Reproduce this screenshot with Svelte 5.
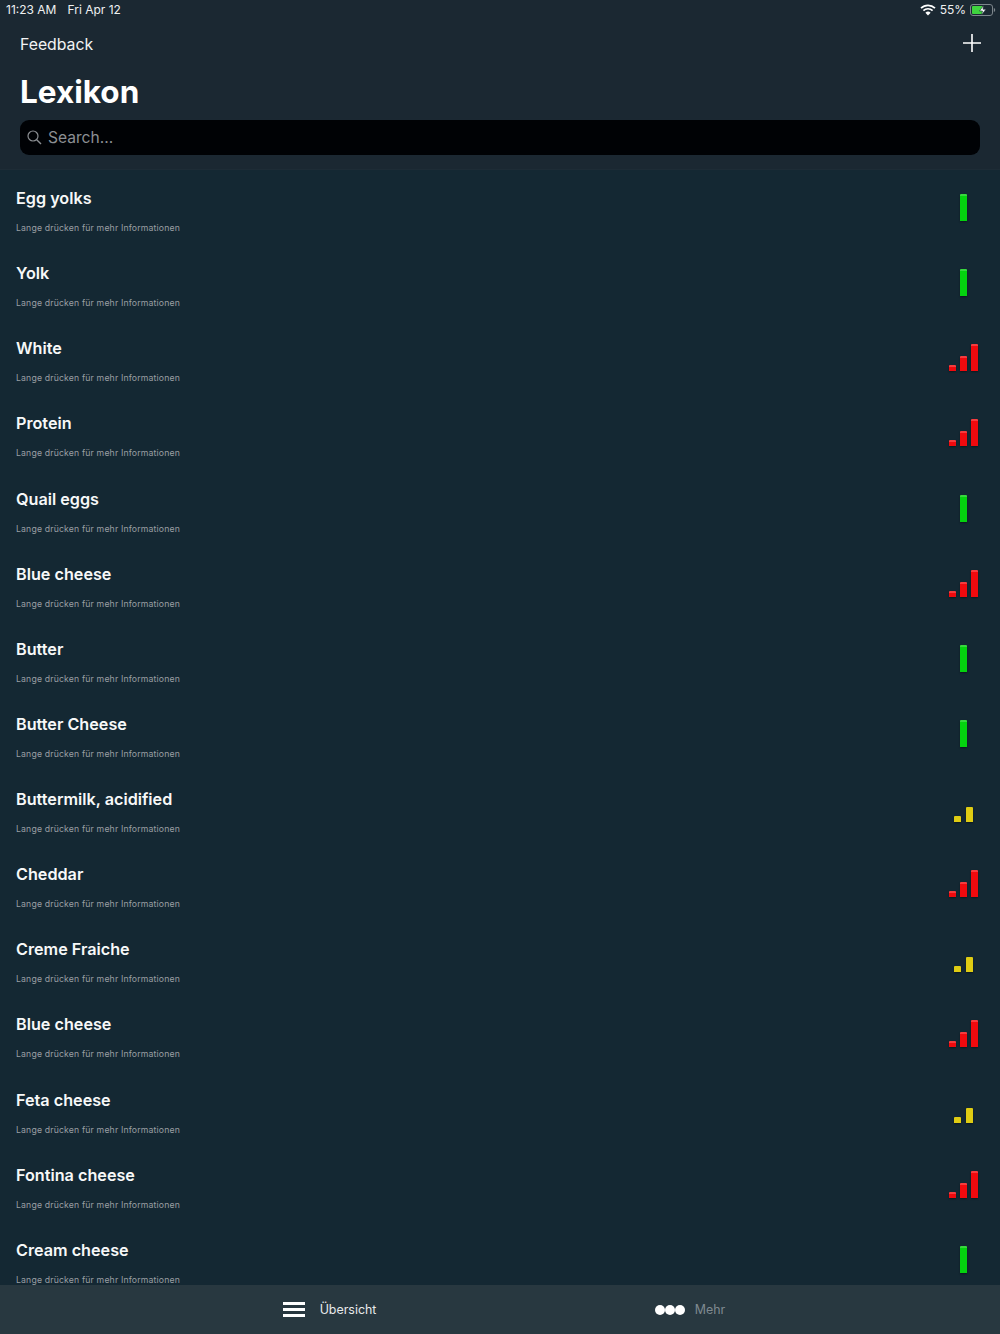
<script lang="ts">
    type Level = 'green' | 'yellow' | 'red';

    const items: { name: string; level: Level }[] = [
        { name: 'Egg yolks', level: 'green' },
        { name: 'Yolk', level: 'green' },
        { name: 'White', level: 'red' },
        { name: 'Protein', level: 'red' },
        { name: 'Quail eggs', level: 'green' },
        { name: 'Blue cheese', level: 'red' },
        { name: 'Butter', level: 'green' },
        { name: 'Butter Cheese', level: 'green' },
        { name: 'Buttermilk, acidified', level: 'yellow' },
        { name: 'Cheddar', level: 'red' },
        { name: 'Creme Fraiche', level: 'yellow' },
        { name: 'Blue cheese', level: 'red' },
        { name: 'Feta cheese', level: 'yellow' },
        { name: 'Fontina cheese', level: 'red' },
        { name: 'Cream cheese', level: 'green' }
    ];
</script>

<div class="screen">
    <header>
        <div class="status">
            <div class="clock">
                <span>11:23 AM</span>
                <span>Fri Apr 12</span>
            </div>
            <div class="status-right">
                <svg width="16" height="12" viewBox="0 0 16 12">
                    <path d="M1 4.2a10 10 0 0 1 14 0" fill="none" stroke="#fff" stroke-width="1.7" />
                    <path d="M3.4 6.6a6.6 6.6 0 0 1 9.2 0" fill="none" stroke="#fff" stroke-width="1.7" />
                    <path d="M8 11.6 5.4 8.7a3.7 3.7 0 0 1 5.2 0z" fill="#fff" />
                </svg>
                <span>55%</span>
                <svg width="26" height="12" viewBox="0 0 26 12">
                    <rect x="0.5" y="0.5" width="22" height="11" rx="2.5" fill="none" stroke="#7d868c" />
                    <rect x="2" y="2" width="11" height="8" rx="1" fill="#3fd33f" />
                    <path d="M23.8 4v4c.8-.2 1.400-1 1.400-2s-.6-1.800-1.400-2z" fill="#7d868c" />
                    <path d="M13.500 1.500 9.500 7h3l-.8 3.800L16 5.200h-3z" fill="#fff" stroke="#1b2832" stroke-width="0.6" />
                </svg>
            </div>
        </div>
        <div class="nav">
            <span class="feedback">Feedback</span>
            <svg width="18" height="18" viewBox="0 0 18 18">
                <path d="M9 0v18M0 9h18" stroke="#fff" stroke-width="1.6" />
            </svg>
        </div>
        <h1>Lexikon</h1>
        <div class="search">
            <svg width="15" height="15" viewBox="0 0 15 15">
                <circle cx="6" cy="6" r="5" fill="none" stroke="#8b8f93" stroke-width="1.2" />
                <path d="M9.700 9.700 14 14" stroke="#8b8f93" stroke-width="1.4" />
            </svg>
            <span>Search...</span>
        </div>
    </header>

    <main>
        {#each items as item}
            <div class="row">
                <div class="text">
                    <div class="name">{item.name}</div>
                    <div class="hint">Lange drücken für mehr Informationen</div>
                </div>
                <div class="bars {item.level}">
                    {#if item.level === 'green'}
                        <i class="tall"></i>
                    {:else if item.level === 'yellow'}
                        <i class="low"></i>
                        <i class="mid"></i>
                    {:else}
                        <i class="low"></i>
                        <i class="mid"></i>
                        <i class="tall"></i>
                    {/if}
                </div>
            </div>
        {/each}
    </main>

    <nav class="tabs">
        <div class="tab">
            <svg width="22" height="15" viewBox="0 0 22 15">
                <path d="M0 1.500h22M0 7.500h22M0 13.500h22" stroke="#fff" stroke-width="3" />
            </svg>
            <span>Übersicht</span>
        </div>
        <div class="tab more">
            <svg width="30" height="10" viewBox="0 0 30 10">
                <circle cx="5" cy="5" r="5" fill="#fff" />
                <circle cx="15" cy="5" r="5" fill="#fff" />
                <circle cx="25" cy="5" r="5" fill="#fff" />
            </svg>
            <span>Mehr</span>
        </div>
    </nav>
</div>

<style>
    :global(body) {
        margin: 0;
        background: #142833;
    }

    .screen {
        width: 1000px;
        height: 1334px;
        display: flex;
        flex-direction: column;
        overflow: hidden;
        font-family: Inter, "Noto Sans", sans-serif;
        color: #fff;
        background: #142833;
    }

    header {
        height: 170px;
        flex: none;
        box-sizing: border-box;
        background: #1b2832;
        border-bottom: 1px solid #1e2c36;
    }

    .status {
        height: 19px;
        padding: 0 4px 0 6px;
        display: flex;
        justify-content: space-between;
        align-items: center;
        font-size: 12px;
        color: #eef0f1;
    }

    .clock {
        display: flex;
        gap: 11px;
    }

    .status-right {
        display: flex;
        align-items: center;
        gap: 4px;
    }

    .nav {
        height: 48px;
        padding: 0 19px 0 19px;
        display: flex;
        justify-content: space-between;
        align-items: center;
    }

    .feedback {
        margin: 2px 0 0 1px;
        font-size: 15.800px;
        color: #f2f3f4;
    }

    h1 {
        margin: 0;
        padding-left: 20px;
        font-size: 31.500px;
        font-weight: 700;
        line-height: 50px;
    }

    .search {
        height: 35px;
        margin: 3px 20px 0;
        padding-left: 7px;
        display: flex;
        align-items: center;
        gap: 6px;
        background: #000205;
        border-radius: 9px;
        font-size: 15.600px;
        color: #8b8f93;
    }

    main {
        flex: 1;
        min-height: 0;
        overflow: hidden;
    }

    .row {
        height: 75.140px;
        box-sizing: border-box;
        padding: 18px 22px 0 16px;
        display: flex;
        justify-content: space-between;
    }

    .name {
        font-size: 16.200px;
        font-weight: 600;
        line-height: 21px;
        color: #f7f8f8;
    }

    .hint {
        margin-top: 12px;
        font-size: 8.700px;
        line-height: 14px;
        letter-spacing: 0.160px;
        color: #9a9fa3;
    }

    .bars {
        width: 30px;
        height: 27px;
        margin-top: 6px;
        display: flex;
        justify-content: center;
        align-items: flex-end;
        gap: 4px;
    }

    .bars i {
        display: block;
        width: 7px;
        border-radius: 1px 1px 0 0;
        box-shadow: 0 1px 2px rgba(0, 0, 0, 0.4);
    }

    .bars .low { height: 6px; }
    .bars .mid { height: 15px; }
    .bars .tall { height: 27px; }

    .green i { background: linear-gradient(#38d83e 0 2px, #04d30f 2px); }
    .red i { background: linear-gradient(#f63c3e 0 2px, #f00a0e 2px); }
    .yellow { gap: 5px; }
    .yellow i { background: #dfcc13; }

    .tabs {
        height: 49px;
        flex: none;
        display: grid;
        grid-template-columns: 1fr 1fr;
        background: #283840;
        font-size: 12.400px;
    }

    .tab {
        display: flex;
        justify-content: center;
        align-items: center;
        gap: 15px;
        color: #e8eaeb;
        padding-left: 159px;
        box-sizing: border-box;
    }

    .tab.more {
        gap: 10px;
        padding: 0 120px 0 0;
        color: #7f8a90;
    }
</style>
